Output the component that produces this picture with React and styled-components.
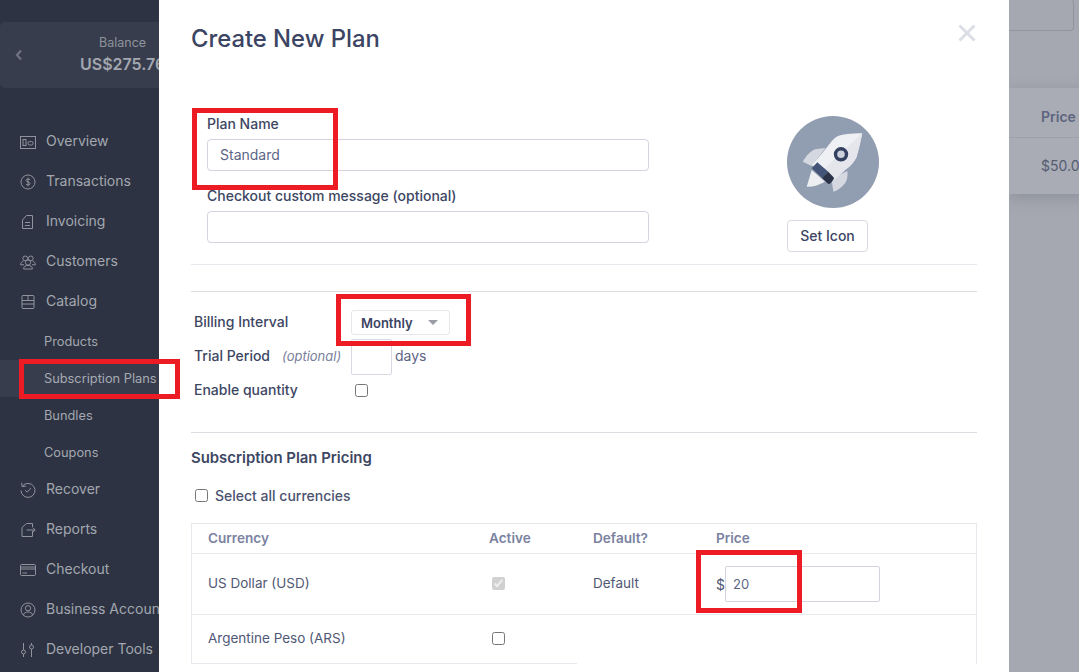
import React from "react";
import styled, { createGlobalStyle } from "styled-components";

const GlobalStyle = createGlobalStyle`
  html, body {
    margin: 0;
    padding: 0;
    background: #a5a8b1;
    font-family: Inter, "Liberation Sans", sans-serif;
  }
  * { box-sizing: border-box; }
`;

const Page = styled.div`
  position: relative;
  display: flex;
  width: 1079px;
  height: 672px;
  overflow: hidden;
`;

/* sidebar */
const Sidebar = styled.aside`
  flex: 0 0 159px;
  height: 672px;
  padding-top: 22px;
  background: #2d3342;
  overflow: hidden;
`;

const Balance = styled.div`
  display: flex;
  align-items: center;
  width: 200px;
  height: 66px;
  padding-left: 15px;
  background: #373d4c;
  border-radius: 5px 0 0 5px;
`;

const BalanceText = styled.div`
  margin-left: 57px;
  text-align: center;
  white-space: nowrap;
`;

const BalanceLabel = styled.div`
  margin-top: -2px;
  font-size: 12.5px;
  line-height: 18px;
  color: #8f939d;
`;

const BalanceValue = styled.div`
  margin-top: 1px;
  font-size: 16px;
  line-height: 22px;
  font-weight: 600;
  color: #a3a7b0;
`;

const Nav = styled.nav`
  display: flex;
  flex-direction: column;
  margin-top: 32px;
`;

const NavItem = styled.div`
  display: flex;
  align-items: center;
  gap: 10px;
  height: 40px;
  padding-left: 20px;
  font-size: 14px;
  color: #a3a7b0;
  white-space: nowrap;
  svg { flex: 0 0 16px; margin-top: 3px; }
`;

const SubGroup = styled.div`
  height: 148px;
  padding-top: 3px;
`;

const SubItem = styled.div`
  display: flex;
  align-items: center;
  height: 37px;
  padding-left: 44px;
  font-size: 12.8px;
  color: ${(p) => (p.$active ? "#a7abb4" : "#a3a7b0")};
  background: ${(p) => (p.$active ? "#373d4c" : "transparent")};
  white-space: nowrap;
`;

/* modal */
const Modal = styled.main`
  position: relative;
  flex: 0 0 850px;
  height: 672px;
  padding: 0 32px;
  background: #fff;
  color: #3d4663;
  overflow: hidden;
`;

const Title = styled.h1`
  margin: 24px 0 0;
  font-size: 23.8px;
  line-height: 30px;
  font-weight: 500;
  color: #3b4463;
`;

const Close = styled.div`
  position: absolute;
  top: 24px;
  right: 33px;
  width: 18px;
  height: 18px;
  color: #dcdee6;
`;

const TopSection = styled.section`
  display: flex;
  margin-top: 60px;
  padding-bottom: 12px;
  border-bottom: 1px solid #e8e9ee;
`;

const Fields = styled.div`
  width: 458px;
  padding-left: 16px;
`;

const FieldLabel = styled.label`
  display: block;
  margin-top: ${(p) => p.$gap || 0}px;
  font-size: 14px;
  line-height: 20px;
  font-weight: 500;
  color: #3d4663;
`;

const TextInput = styled.input`
  display: block;
  width: 442px;
  height: 32px;
  margin-top: 5px;
  padding: 0 12px 1px 12px;
  border: 1px solid #d3d4df;
  border-radius: 4px;
  outline: none;
  font: 400 14px Inter, sans-serif;
  color: #5d6585;
`;

const IconColumn = styled.div`
  display: flex;
  flex-direction: column;
  align-items: flex-start;
  margin: 2px 0 0 138px;
`;

const SetIcon = styled.button`
  width: 81px;
  height: 32px;
  margin-top: 12px;
  padding: 0 0 2px;
  background: #fff;
  border: 1px solid #d8d9e2;
  border-radius: 4px;
  font: 500 14px Inter, sans-serif;
  color: #3b4463;
`;

const Billing = styled.section`
  margin-top: 26px;
  padding: 18px 0 27px 3px;
  border-top: 1px solid #dcdde3;
  border-bottom: 1px solid #dcdde3;
`;

const BillingRow = styled.div`
  display: flex;
  align-items: center;
  height: ${(p) => p.$height}px;
  margin-top: ${(p) => p.$gap || 0}px;
`;

const RowLabel = styled.div`
  flex: 0 0 157px;
  padding-bottom: ${(p) => (p.$low ? 1 : 3)}px;
  font-size: 14px;
  font-weight: 500;
  color: #3d4663;
  white-space: nowrap;
`;

const Optional = styled.em`
  margin-left: 12px;
  font-size: 13px;
  font-weight: 400;
  color: #7a809a;
`;

const SelectBox = styled.div`
  display: flex;
  align-items: center;
  justify-content: space-between;
  width: 99px;
  height: 25px;
  padding: 0 11px 0 9px;
  border: 1px solid #e6e7ec;
  border-radius: 3px;
  font-size: 13px;
  font-weight: 600;
  color: #3b4463;
`;

const Caret = styled.span`
  width: 0;
  height: 0;
  border-left: 5px solid transparent;
  border-right: 5px solid transparent;
  border-top: 5px solid #9a9da6;
`;

const TrialInput = styled.input`
  width: 41px;
  height: 36px;
  padding: 0;
  border: 1px solid #d8d9e3;
  border-radius: 2px;
  outline: none;
`;

const Days = styled.span`
  margin: 0 0 3px 3px;
  font-size: 14px;
  color: #5d6585;
`;

const Check = styled.input.attrs({ type: "checkbox" })`
  width: 13px;
  height: 13px;
  margin: ${(p) => p.$margin || "0"};
  flex: none;
`;

const Heading = styled.h2`
  margin: 15px 0 0;
  font-size: 14.9px;
  line-height: 20px;
  font-weight: 600;
  color: #3d4663;
`;

const SelectAll = styled.label`
  display: flex;
  align-items: center;
  height: 20px;
  margin-top: 17px;
  padding-left: 4px;
  font-size: 14px;
  font-weight: 500;
  color: #4a5270;
`;

const CurrencyTable = styled.div`
  display: grid;
  grid-template-columns: 281px 104px 123px 1fr;
  grid-auto-rows: auto;
  margin-top: 18px;
  border: 1px solid #e8e9ee;
  border-bottom: 0;
`;

const HeadCell = styled.div`
  display: flex;
  align-items: center;
  height: 30px;
  padding: 0 0 2px 16px;
  border-bottom: 1px solid #e8e9ee;
  font-size: 13.6px;
  font-weight: 600;
  color: #7b82a0;
`;

const Cell = styled.div`
  display: flex;
  align-items: center;
  height: ${(p) => p.$height}px;
  padding: 0 0 2px 16px;
  border-bottom: ${(p) => (p.$open ? "0" : "1px solid #e8e9ee")};
  font-size: 13.5px;
  color: #505875;
`;

const PriceCell = styled(Cell)`
  padding-bottom: 0;
`;

const Dollar = styled.span`
  font-size: 14px;
  color: #505875;
`;

const PriceInput = styled.input`
  width: 155px;
  height: 36px;
  padding: 0 7px;
  border: 1px solid #d3d4df;
  border-radius: 2px;
  outline: none;
  font: 400 13px Inter, sans-serif;
  color: #5d6585;
`;

/* dimmed page behind the modal */
const Backdrop = styled.div`
  flex: 1;
  height: 672px;
  background: #a5a8b1;
`;

const DimSearch = styled.div`
  width: 65px;
  height: 32px;
  margin-top: -1px;
  border: 1px solid #92959f;
  border-left: 0;
  border-radius: 0 4px 4px 0;
`;

const DimCard = styled.div`
  margin-top: 57px;
  height: 106px;
  background: #a9acb5;
  box-shadow: 0 4px 14px rgba(70, 74, 90, 0.25);
`;

const DimHead = styled.div`
  display: flex;
  align-items: center;
  height: 50px;
  padding: 8px 0 0 32px;
  border-bottom: 1px solid #9da0aa;
  font-size: 14px;
  font-weight: 600;
  color: #5d6580;
  white-space: nowrap;
`;

const DimCell = styled.div`
  display: flex;
  align-items: center;
  height: 55px;
  padding-left: 32px;
  font-size: 14px;
  color: #565c72;
  white-space: nowrap;
`;

/* red marks drawn over the screenshot */
const RedBox = styled.div`
  position: absolute;
  left: ${(p) => p.$x}px;
  top: ${(p) => p.$y}px;
  width: ${(p) => p.$w}px;
  height: ${(p) => p.$h}px;
  border: 5px solid #ed1c24;
  pointer-events: none;
`;

const Icon = ({ children }) => (
  <svg width="16" height="16" viewBox="0 0 16 16" fill="none" stroke="#8f939d" strokeWidth="1">
    {children}
  </svg>
);

const ChevronLeft = () => (
  <svg width="8" height="12" viewBox="0 0 8 12" fill="none" stroke="#6f7480" strokeWidth="2.2">
    <path d="M6 1.5 L2 6 L6 10.5" />
  </svg>
);

const OverviewIcon = () => (
  <Icon>
    <rect x="0.5" y="2.5" width="15" height="12" />
    <rect x="3" y="5.5" width="3" height="6" />
    <rect x="8" y="7.5" width="5" height="3.5" rx="1.5" />
  </Icon>
);

const DollarIcon = () => (
  <Icon>
    <circle cx="8" cy="8" r="7" />
    <path d="M10 5.8 C9.5 4.8 6 4.6 6 6.4 C6 8.2 10 7.6 10 9.6 C10 11.4 6.5 11.2 6 10.2 M8 3.8 V12.2" />
  </Icon>
);

const InvoiceIcon = () => (
  <Icon>
    <path d="M2.5 6 L6.5 1.5 H12.5 V14.5 H2.5 Z" />
    <path d="M5 8.5 H10 M5 11.5 H10" />
  </Icon>
);

const UsersIcon = () => (
  <Icon>
    <circle cx="5.2" cy="4.4" r="2.4" />
    <circle cx="10.8" cy="4.4" r="2.4" />
    <circle cx="8" cy="8.6" r="2.6" />
    <path d="M3.4 7 C1.6 7.6 0.6 9 0.6 10.8 H4 M12.6 7 C14.4 7.6 15.4 9 15.4 10.8 H12" />
    <path d="M3.6 15 C3.6 12.6 5.4 11.4 8 11.4 C10.6 11.4 12.4 12.6 12.4 15 Z" />
  </Icon>
);

const CatalogIcon = () => (
  <Icon>
    <rect x="2" y="1.5" width="12" height="13" rx="1" />
    <path d="M2 6.5 H14 M2 10 H14 M8 1.5 V6.5" />
  </Icon>
);

const RecoverIcon = () => (
  <Icon>
    <path d="M2.4 4.2 A7 7 0 1 1 1 8.4" />
    <path d="M1.6 0.8 L2.2 4.6 L6 4" />
    <path d="M5.2 8.2 L7.2 10.2 L10.8 6.2" />
  </Icon>
);

const ReportsIcon = () => (
  <Icon>
    <path d="M12.5 9 V14.5 H2 V5.5 L6.5 1.5 H12.5 V5" />
    <path d="M6.5 8 H15 M12.8 5.6 L15.2 8 L12.8 10.4" />
  </Icon>
);

const CardIcon = () => (
  <Icon>
    <rect x="0.5" y="2.5" width="15" height="11" rx="1" />
    <path d="M0.5 5 H15.5 M0.5 7 H15.5 M2.5 11 H7" />
  </Icon>
);

const AccountIcon = () => (
  <Icon>
    <circle cx="8" cy="8" r="7" />
    <circle cx="8" cy="6.2" r="2.6" />
    <path d="M3.4 13 C4 10.8 5.8 10 8 10 C10.2 10 12 10.8 12.6 13" />
  </Icon>
);

const SlidersIcon = () => (
  <Icon>
    <path d="M3.5 1 V8 M3.5 12 V15 M11.5 1 V3 M11.5 7 V15" />
    <circle cx="3.5" cy="10" r="2" />
    <circle cx="11.5" cy="5" r="2" />
  </Icon>
);

const CloseIcon = () => (
  <svg width="18" height="18" viewBox="0 0 18 18" stroke="currentColor" strokeWidth="3">
    <path d="M1.5 1.5 L16.5 16.5 M16.5 1.5 L1.5 16.5" />
  </svg>
);

const Rocket = () => (
  <svg width="92" height="92" viewBox="0 0 92 92">
    <circle cx="46" cy="46" r="46" fill="#919db0" />
    <path d="M15.7 45.7 C19 40 24 34.5 28 33.3 L38.5 32 L24.7 50 Z" fill="#d5d8e1" />
    <path d="M60.3 55 C61 60 60 65 58 67.3 C54 72 50 75 46.3 75.7 L44.5 63 Z" fill="#d5d8e1" />
    <path d="M24.7 54 L19.7 70.7 C26 71 32 69 38 65.7 Z" fill="#eceef2" />
    <path d="M75.3 17.3 C64 17.6 55 18 49.7 20.7 C44 24 40 33 24.7 49 L46.3 64 C52 60 54 58 58 54 C64 50 67 46 69.7 40.7 C72 34 74 24 75.3 17.3 Z" fill="#eff0f4" />
    <path d="M75.3 17.3 C72 30 70 37 69.7 40.7 C67 46 62 51 58 54 C54 58 50 61 46.3 64 L35 55 Z" fill="#e4e6ec" />
    <path d="M30.3 46.3 L24.7 52.3 L35 62 L41 55.5 Z" fill="#435478" />
    <path d="M41 55.5 L35 62 L41.3 68 C43 68.5 47 63.5 47 61.7 Z" fill="#2b3349" />
    <circle cx="54" cy="38.3" r="5.5" fill="#ccd0da" stroke="#34405f" strokeWidth="3.4" />
  </svg>
);

const App = () => {
  return (
    <Page>
      <GlobalStyle />
      <Sidebar>
        <Balance>
          <ChevronLeft />
          <BalanceText>
            <BalanceLabel>Balance</BalanceLabel>
            <BalanceValue>US$275.76</BalanceValue>
          </BalanceText>
        </Balance>
        <Nav>
          <NavItem><OverviewIcon />Overview</NavItem>
          <NavItem><DollarIcon />Transactions</NavItem>
          <NavItem><InvoiceIcon />Invoicing</NavItem>
          <NavItem><UsersIcon />Customers</NavItem>
          <NavItem><CatalogIcon />Catalog</NavItem>
          <SubGroup>
            <SubItem>Products</SubItem>
            <SubItem $active>Subscription Plans</SubItem>
            <SubItem>Bundles</SubItem>
            <SubItem>Coupons</SubItem>
          </SubGroup>
          <NavItem><RecoverIcon />Recover</NavItem>
          <NavItem><ReportsIcon />Reports</NavItem>
          <NavItem><CardIcon />Checkout</NavItem>
          <NavItem><AccountIcon />Business Account</NavItem>
          <NavItem><SlidersIcon />Developer Tools</NavItem>
        </Nav>
      </Sidebar>

      <Modal>
        <Close><CloseIcon /></Close>
        <Title>Create New Plan</Title>

        <TopSection>
          <Fields>
            <FieldLabel>Plan Name</FieldLabel>
            <TextInput defaultValue="Standard" />
            <FieldLabel $gap={15}>Checkout custom message (optional)</FieldLabel>
            <TextInput />
          </Fields>
          <IconColumn>
            <Rocket />
            <SetIcon>Set Icon</SetIcon>
          </IconColumn>
        </TopSection>

        <Billing>
          <BillingRow $height={25}>
            <RowLabel>Billing Interval</RowLabel>
            <SelectBox>Monthly<Caret /></SelectBox>
          </BillingRow>
          <BillingRow $height={36} $gap={4}>
            <RowLabel>Trial Period<Optional>(optional)</Optional></RowLabel>
            <TrialInput />
            <Days>days</Days>
          </BillingRow>
          <BillingRow $height={30}>
            <RowLabel $low>Enable quantity</RowLabel>
            <Check $margin="0 0 0 4px" />
          </BillingRow>
        </Billing>

        <Heading>Subscription Plan Pricing</Heading>
        <SelectAll><Check $margin="0 7px 0 0" />Select all currencies</SelectAll>

        <CurrencyTable>
          <HeadCell>Currency</HeadCell>
          <HeadCell>Active</HeadCell>
          <HeadCell>Default?</HeadCell>
          <HeadCell>Price</HeadCell>

          <Cell $height={61}>US Dollar (USD)</Cell>
          <Cell $height={61}><Check $margin="0 0 0 3px" checked disabled readOnly /></Cell>
          <Cell $height={61}>Default</Cell>
          <PriceCell $height={61}>
            <Dollar>$</Dollar>
            <PriceInput defaultValue="20" />
          </PriceCell>

          <Cell $height={49}>Argentine Peso (ARS)</Cell>
          <Cell $height={49}><Check $margin="0 0 0 3px" /></Cell>
          <Cell $height={49} $open />
          <Cell $height={49} $open />
        </CurrencyTable>
      </Modal>

      <Backdrop>
        <DimSearch />
        <DimCard>
          <DimHead>Price</DimHead>
          <DimCell>$50.00</DimCell>
        </DimCard>
      </Backdrop>

      <RedBox $x={192} $y={108} $w={146} $h={82} />
      <RedBox $x={19} $y={359} $w={161} $h={40} />
      <RedBox $x={336} $y={294} $w={135} $h={52} />
      <RedBox $x={696} $y={550} $w={106} $h={63} />
    </Page>
  );
};

export default App;
